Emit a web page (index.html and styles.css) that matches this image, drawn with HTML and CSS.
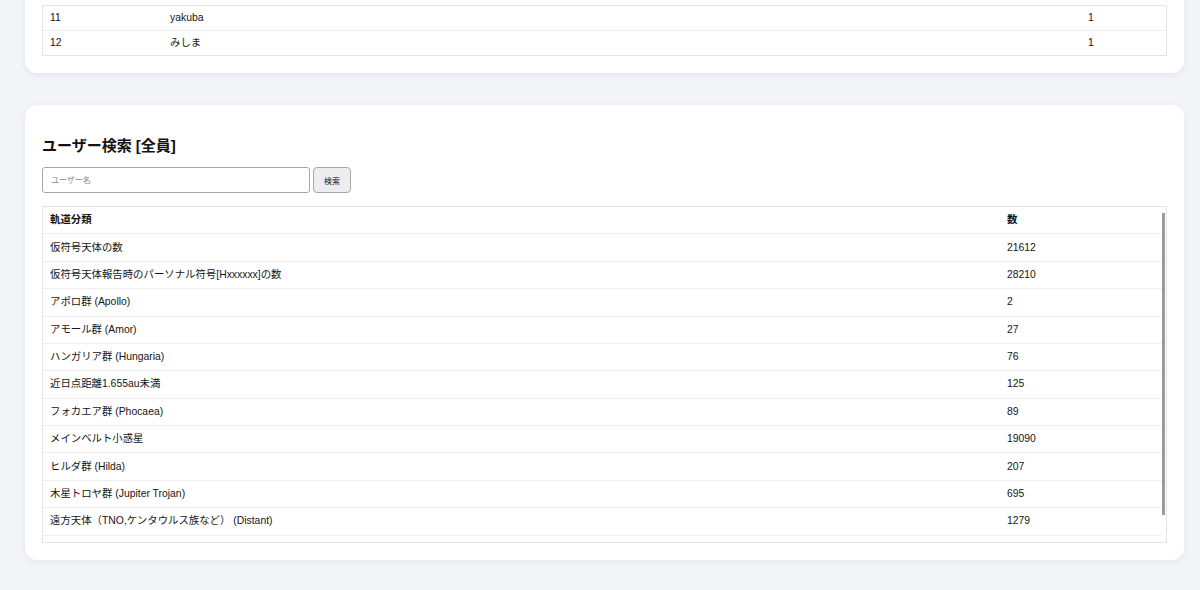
FILE: index.html
```html
<!DOCTYPE html>
<html lang="ja">
<head>
<meta charset="utf-8">
<title>ユーザー検索</title>
<link rel="stylesheet" href="styles.css">
</head>
<body>
<div class="page">
  <section class="card card-top">
    <div class="table-box">
      <table class="data">
        <tbody>
          <tr><td class="c-rank">11</td><td>yakuba</td><td class="c-count">1</td></tr>
          <tr><td class="c-rank">12</td><td>みしま</td><td class="c-count">1</td></tr>
        </tbody>
      </table>
    </div>
  </section>

  <section class="card">
    <h3 class="title">ユーザー検索 [全員]</h3>
    <form class="search">
      <input class="search-input" type="text" placeholder="ユーザー名">
      <button class="search-btn" type="button">検索</button>
    </form>
    <div class="table-box scroll-wrap">
      <div class="scroll">
        <table class="data orbit">
          <thead>
            <tr><th class="c-name">軌道分類</th><th>数</th></tr>
          </thead>
          <tbody>
            <tr><td>仮符号天体の数</td><td>21612</td></tr>
            <tr><td>仮符号天体報告時のパーソナル符号[Hxxxxxx]の数</td><td>28210</td></tr>
            <tr><td>アポロ群 (Apollo)</td><td>2</td></tr>
            <tr><td>アモール群 (Amor)</td><td>27</td></tr>
            <tr><td>ハンガリア群 (Hungaria)</td><td>76</td></tr>
            <tr><td>近日点距離1.655au未満</td><td>125</td></tr>
            <tr><td>フォカエア群 (Phocaea)</td><td>89</td></tr>
            <tr><td>メインベルト小惑星</td><td>19090</td></tr>
            <tr><td>ヒルダ群 (Hilda)</td><td>207</td></tr>
            <tr><td>木星トロヤ群 (Jupiter Trojan)</td><td>695</td></tr>
            <tr><td>遠方天体（TNO,ケンタウルス族など） (Distant)</td><td>1279</td></tr>
            <tr><td>&nbsp;</td><td>&nbsp;</td></tr>
          </tbody>
        </table>
      </div>
      <div class="thumb"></div>
    </div>
  </section>
</div>
</body>
</html>
```

FILE: styles.css
```css
html, body {
  margin: 0;
  padding: 0;
  background: #f3f4f8;
  overflow: hidden;
}

body {
  font-family: "Liberation Sans", Arial, "Noto Sans CJK JP", sans-serif;
  color: #151515;
  font-size: 10.4px;
}

.page {
  display: flex;
  flex-direction: column;
  gap: 32px;
  padding: 0 16px 40px 25px;
}

.card {
  background: #fff;
  border-radius: 12px;
  box-shadow: 0 2px 6px rgba(30, 40, 80, 0.07);
  padding: 17px;
}

.card-top {
  margin-top: -40px;
  padding-top: 45px;
}

.title {
  margin: 15px 0 12px;
  font-size: 15px;
  line-height: 18px;
  font-weight: bold;
  color: #111;
}

.search {
  display: flex;
  gap: 3px;
  margin: 0 0 13px;
}

.search-input {
  box-sizing: border-box;
  width: 268px;
  height: 26px;
  border: 1px solid #a8a8a8;
  border-radius: 3px;
  padding: 0 8px;
  font-family: inherit;
  font-size: 8px;
  color: #333;
  background: #fff;
}

.search-input::placeholder {
  color: #8a8a8a;
}

.search-btn {
  box-sizing: border-box;
  width: 38px;
  height: 26px;
  border: 1px solid #a8a8a8;
  border-radius: 4px;
  background: #ededf0;
  font-family: inherit;
  font-size: 8px;
  color: #222;
  padding: 0;
}

.table-box {
  border: 1px solid #e4e4e4;
}

.scroll-wrap {
  position: relative;
}

.scroll {
  max-height: 335px;
  overflow: hidden;
  padding-right: 4px;
}

.thumb {
  position: absolute;
  top: 6px;
  right: 1px;
  width: 3px;
  height: 302px;
  background: #9b9b9b;
}

.data {
  width: 100%;
  border-collapse: collapse;
  table-layout: fixed;
}

.data td,
.data th {
  text-align: left;
  padding: 6px 8px 6px 7px;
  line-height: 12px;
  border-top: 1px solid #eeeeee;
  white-space: nowrap;
  font-weight: normal;
}

.data tr:first-child td,
.data tr:first-child th {
  border-top: 0;
}

.c-rank {
  width: 105px;
}

.data td.c-count {
  width: 70px;
}

.orbit td,
.orbit th {
  padding: 7.2px 8px 7.2px 7px;
}

.orbit tbody tr:first-child td {
  border-top: 1px solid #eeeeee;
}

.orbit th {
  font-weight: bold;
  color: #111;
}

.c-name {
  width: 942px;
}
```
